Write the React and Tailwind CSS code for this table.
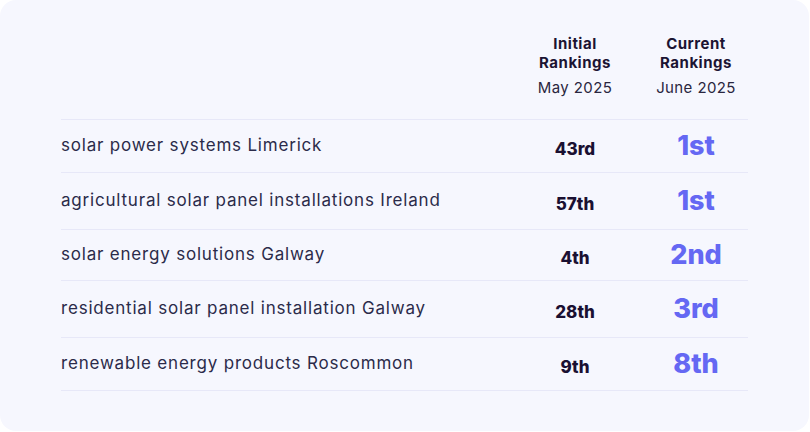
export default function App() {
  const rows = [
    { k: "solar power systems Limerick", a: "43rd", b: "1st", h: "h-[53px]" },
    { k: "agricultural solar panel installations Ireland", a: "57th", b: "1st", h: "h-[57px]" },
    { k: "solar energy solutions Galway", a: "4th", b: "2nd", h: "h-[51px]" },
    { k: "residential solar panel installation Galway", a: "28th", b: "3rd", h: "h-[57px]" },
    { k: "renewable energy products Roscommon", a: "9th", b: "8th", h: "h-[54px]" },
  ];
  return (
    <div className="bg-white w-[810px] h-[432px]" style={{ fontFamily: "Inter, 'Noto Sans', sans-serif" }}>
      <div className="w-[809px] h-[431px] rounded-[16px] bg-[#f6f7fe] pl-[61px] pt-[35px]">
        <div className="w-[687px]">
          <div className="flex h-[84px]">
            <div className="flex-1" />
            <div className="w-[138px] flex flex-col items-center text-[#1c1433]">
              <div className="text-[15px] font-bold leading-[18.5px] text-center tracking-[0.5px]">Initial<br />Rankings</div>
              <div className="text-[15px] leading-[18px] mt-[7px] text-[#2a2640] tracking-[0.4px]">May 2025</div>
            </div>
            <div className="w-[104px] flex flex-col items-center text-[#1c1433]">
              <div className="text-[15px] font-bold leading-[18.5px] text-center tracking-[0.5px]">Current<br />Rankings</div>
              <div className="text-[15px] leading-[18px] mt-[7px] text-[#2a2640] tracking-[0.4px]">June 2025</div>
            </div>
          </div>
          {rows.map((r, i) => (
            <div key={i} className={`flex items-center border-t border-[#e7e8f8] ${r.h} ${i === rows.length - 1 ? "border-b" : ""}`}>
              <div className="flex-1 text-[17px] text-[#2b2b4a] tracking-[0.8px]">{r.k}</div>
              <div className="flex items-baseline">
                <div className="w-[138px] text-center text-[17px] font-extrabold text-[#1a1032]">{r.a}</div>
                <div className="w-[104px] text-center text-[27px] font-extrabold text-[#6568f3] leading-[32px]">{r.b}</div>
              </div>
            </div>
          ))}
        </div>
      </div>
    </div>
  );
}
